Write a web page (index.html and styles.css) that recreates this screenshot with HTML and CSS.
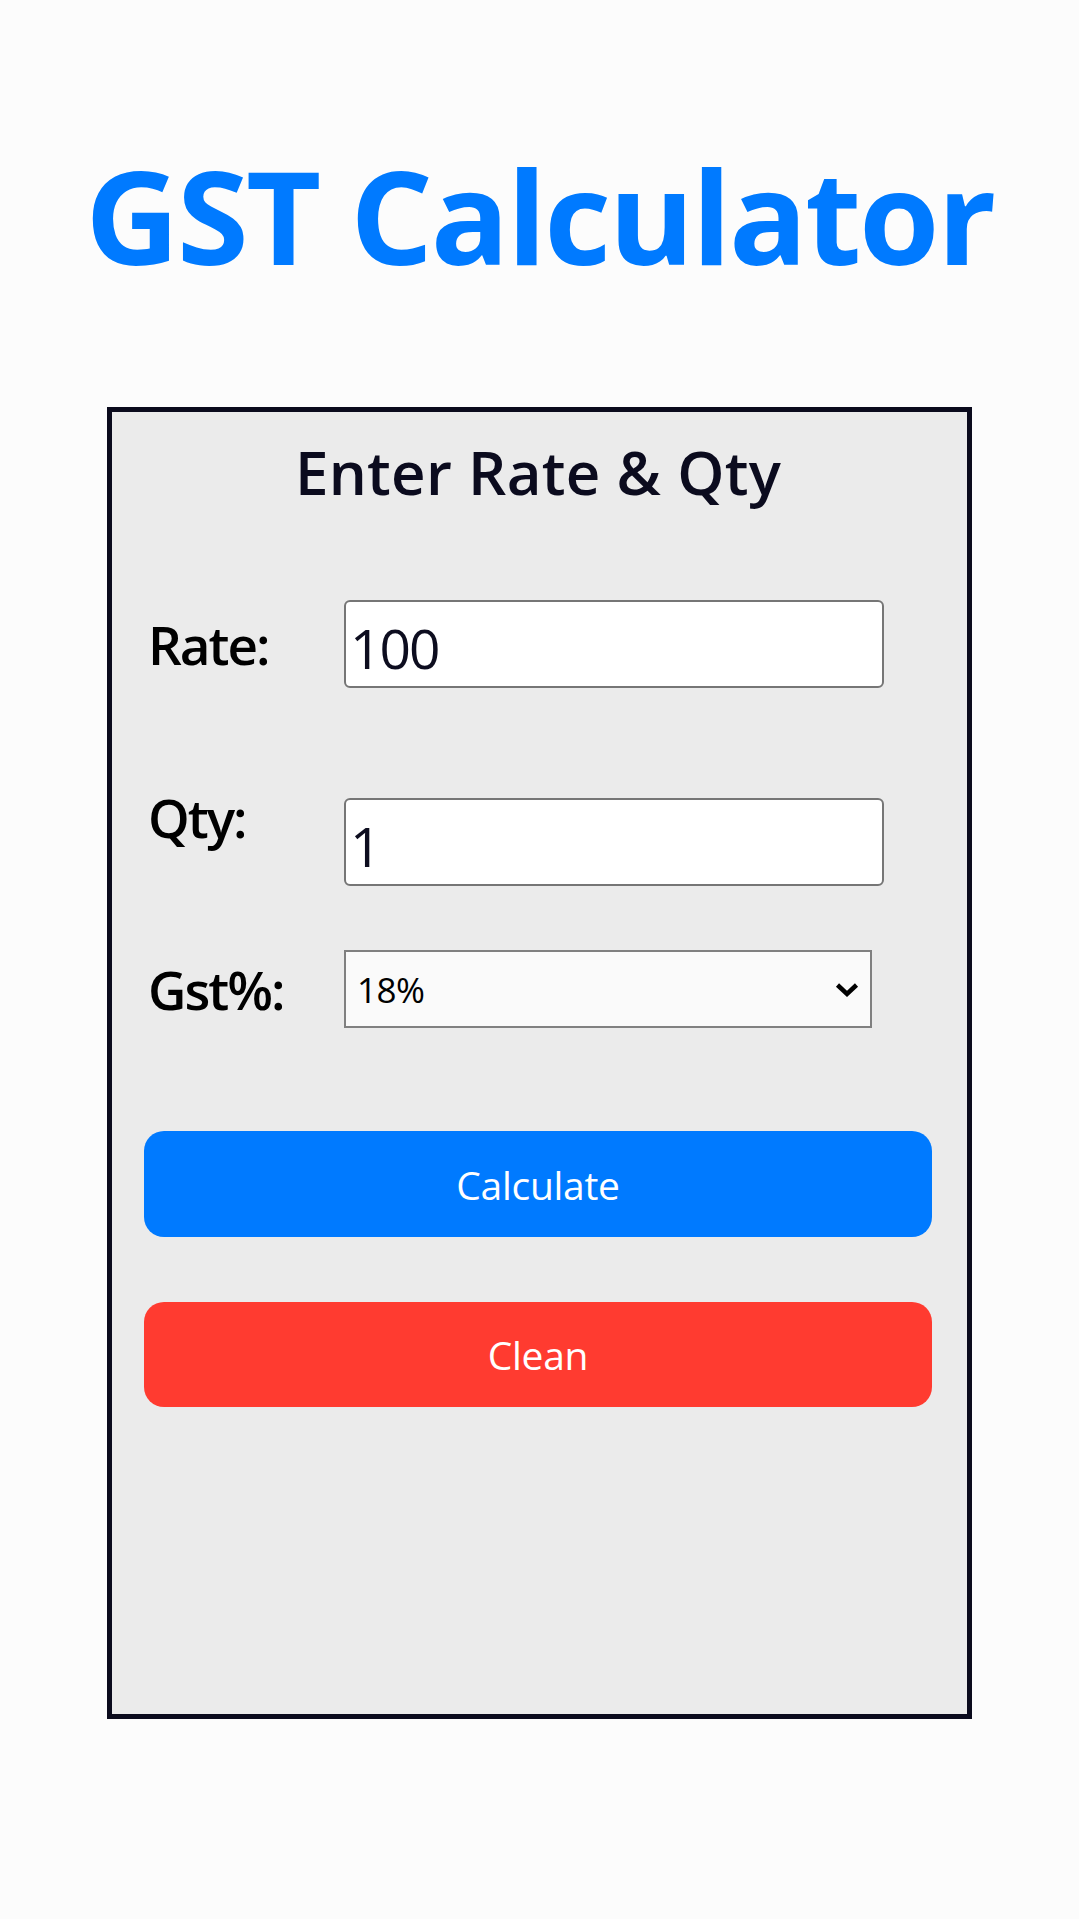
FILE: index.html
```html
<!DOCTYPE html>
<html lang="en">
<head>
<meta charset="utf-8">
<title>GST Calculator</title>
<link rel="stylesheet" href="styles.css">
</head>
<body>
<main class="page">
  <h1 class="title">GST Calculator</h1>
  <section class="card">
    <h2 class="card-title">Enter Rate &amp; Qty</h2>
    <div class="field field-rate">
      <label class="field-label" for="rate">Rate:</label>
      <input class="field-input" id="rate" type="text" value="100">
    </div>
    <div class="field field-qty">
      <label class="field-label" for="qty">Qty:</label>
      <input class="field-input" id="qty" type="text" value="1">
    </div>
    <div class="field field-gst">
      <label class="field-label" for="gst">Gst%:</label>
      <div class="select-wrap">
        <select class="field-select" id="gst">
          <option>5%</option>
          <option>12%</option>
          <option selected>18%</option>
          <option>28%</option>
        </select>
        <svg class="select-chevron" viewBox="0 0 24 16" width="24" height="16" aria-hidden="true">
          <path d="M2.5 3 L12 12 L21.5 3" fill="none" stroke="#000" stroke-width="4.5" stroke-linejoin="miter"/>
        </svg>
      </div>
    </div>
    <button class="btn btn-calc" type="button">Calculate</button>
    <button class="btn btn-clean" type="button">Clean</button>
  </section>
</main>
</body>
</html>
```

FILE: styles.css
```css
html, body {
  margin: 0;
  padding: 0;
  background: #fcfcfc;
}

body {
  font-family: "Open Sans", "Noto Sans", "Liberation Sans", sans-serif;
}

.page {
  display: flex;
  flex-direction: column;
  align-items: center;
  padding-top: 137px;
}

.title {
  margin: 0;
  font-size: 130px;
  line-height: 156px;
  font-weight: 700;
  color: #007aff;
  letter-spacing: -2.4px;
}

.card {
  box-sizing: border-box;
  width: 865px;
  height: 1312px;
  margin-top: 114px;
  border: 5px solid #0b0b1d;
  background: #ebebeb;
  padding: 0 35px 0 32px;
  display: flex;
  flex-direction: column;
}

.card-title {
  margin: 24px 0 0;
  text-align: center;
  font-size: 60px;
  line-height: 72px;
  font-weight: 600;
  color: #0b0b1e;
  letter-spacing: 0.3px;
}

.field {
  display: flex;
  align-items: center;
}

.field-rate { margin-top: 92px; }
.field-qty { margin-top: 110px; align-items: flex-start; }
.field-gst { margin-top: 64px; }

.field-label {
  box-sizing: border-box;
  width: 200px;
  flex: none;
  font-size: 53px;
  font-weight: 600;
  color: #000;
  padding-left: 4px;
  letter-spacing: -2px;
}

.field-qty .field-label {
  line-height: 40px;
}

.field-input {
  box-sizing: border-box;
  width: 540px;
  height: 88px;
  margin: 0;
  border: 2px solid #767676;
  border-radius: 6px;
  background: #fff;
  padding: 6px 6px 0 4px;
  font-family: "Open Sans", "Noto Sans", sans-serif;
  font-size: 55px;
  font-weight: 400;
  color: #0d0d1f;
  letter-spacing: -2px;
  outline: none;
}

.select-wrap {
  position: relative;
  width: 528px;
  height: 78px;
}

.field-select {
  appearance: none;
  -webkit-appearance: none;
  box-sizing: border-box;
  width: 528px;
  height: 78px;
  margin: 0;
  border: 2px solid #808080;
  border-radius: 0;
  background: #fafafa;
  padding: 0 0 0 11px;
  font-family: "Open Sans", "Noto Sans", sans-serif;
  font-size: 35px;
  color: #000;
  letter-spacing: -0.5px;
  outline: none;
}

.select-chevron {
  position: absolute;
  right: 13px;
  top: 32px;
  pointer-events: none;
}

.btn {
  box-sizing: border-box;
  width: 788px;
  border: none;
  border-radius: 20px;
  color: #fff;
  font-family: "Open Sans", "Noto Sans", sans-serif;
  font-size: 39px;
  font-weight: 400;
  letter-spacing: -0.3px;
  padding: 0;
}

.btn-calc {
  margin-top: 103px;
  height: 106px;
  background: #007aff;
}

.btn-clean {
  margin-top: 65px;
  height: 105px;
  background: #ff3b30;
}
```
